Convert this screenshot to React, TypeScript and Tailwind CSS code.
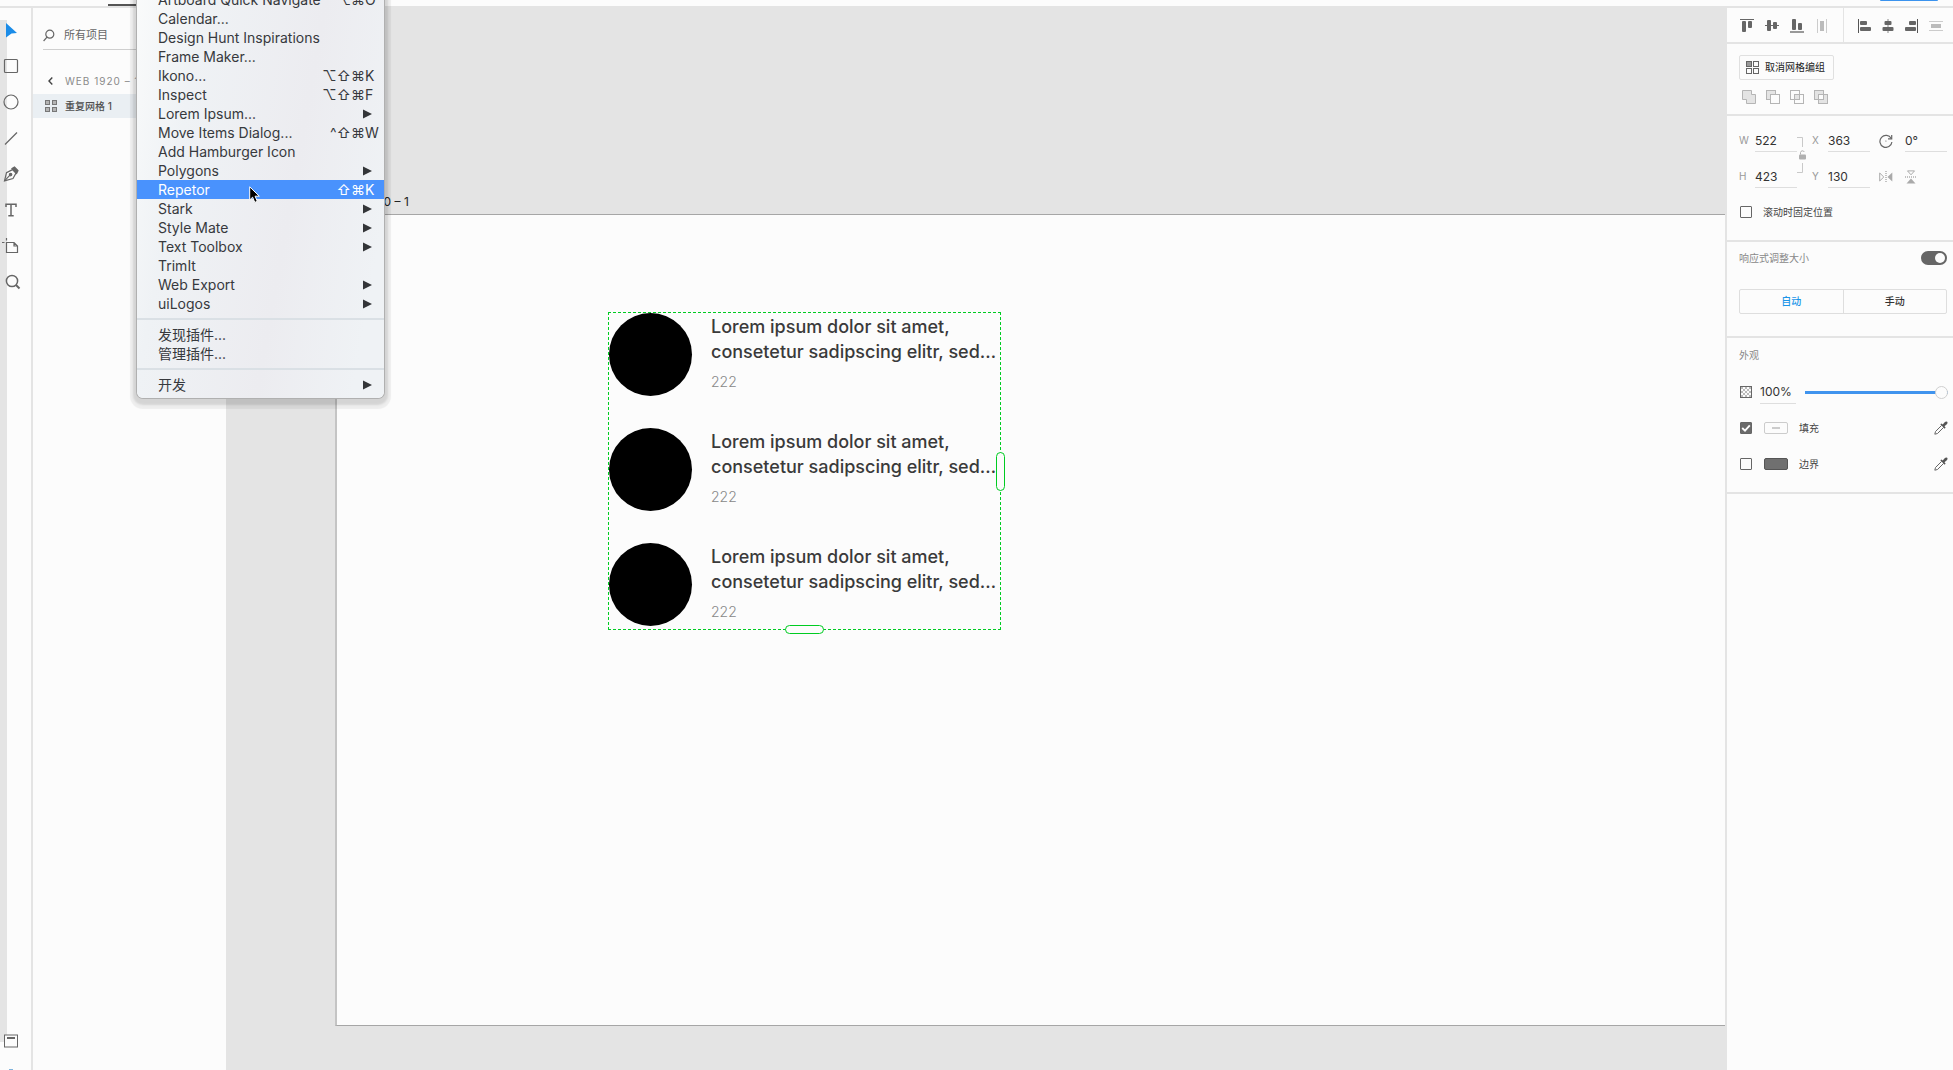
import type { ReactNode } from "react";

type MenuEntry = { label: string; mods?: string; letter?: string; sub?: boolean; active?: boolean };

const menuGroups: MenuEntry[][] = [
  [
    { label: "Artboard Quick Navigate", mods: "⌥⌘", letter: "O" },
    { label: "Calendar..." },
    { label: "Design Hunt Inspirations" },
    { label: "Frame Maker..." },
    { label: "Ikono...", mods: "⌥⇧⌘", letter: "K" },
    { label: "Inspect", mods: "⌥⇧⌘", letter: "F" },
    { label: "Lorem Ipsum...", sub: true },
    { label: "Move Items Dialog...", mods: "^⇧⌘", letter: "W" },
    { label: "Add Hamburger Icon" },
    { label: "Polygons", sub: true },
    { label: "Repetor", mods: "⇧⌘", letter: "K", active: true },
    { label: "Stark", sub: true },
    { label: "Style Mate", sub: true },
    { label: "Text Toolbox", sub: true },
    { label: "TrimIt" },
    { label: "Web Export", sub: true },
    { label: "uiLogos", sub: true },
  ],
  [{ label: "发现插件..." }, { label: "管理插件..." }],
  [{ label: "开发", sub: true }],
];

function PluginMenu() {
  return (
    <div
      role="menu"
      className="absolute -top-[14px] left-[137px] z-20 w-[247px] rounded-b-md bg-[linear-gradient(100deg,#fafbfb_0%,#eff2f5_22%,#ececf0_60%,#eff2f5_90%)] pt-1 pb-1 text-[14px] text-[#37393d] shadow-[0_0_0_1px_#b0b0b0,0_3px_2px_4px_rgba(0,0,0,0.1),0_4px_1px_7px_rgba(0,0,0,0.06)]"
    >
      {menuGroups.map((group, g) => (
        <div key={g} className={g > 0 ? "mt-[5px] border-t-2 border-[#dae0e5] pt-[5px]" : ""}>
          {group.map((item) => (
            <button
              key={item.label}
              role="menuitem"
              className={
                item.active
                  ? "flex h-[19px] w-full items-center bg-[#4992fd] pl-[21px] text-left leading-[19px] text-white"
                  : "flex h-[19px] w-full items-center pl-[21px] text-left leading-[19px]"
              }
            >
              <span className="flex-1 whitespace-nowrap">{item.label}</span>
              {item.mods && (
                <>
                  <span>{item.mods}</span>
                  <span className="w-[19px]">{item.letter}</span>
                </>
              )}
              {item.sub && (
                <svg className="mr-3" width="9" height="10" viewBox="0 0 9 10" fill="#333538">
                  <path d="M0 0.5 L9 5 L0 9.5Z" />
                </svg>
              )}
            </button>
          ))}
        </div>
      ))}
      <svg className="absolute top-[200px] left-[112px]" width="12" height="18" viewBox="0 0 12 18">
        <path
          d="M0.7 0.8 L0.7 14 L3.6 11.2 L5.8 16.4 L8.3 15.3 L6.1 10.2 L10.3 10.2Z"
          fill="#000"
          stroke="#fff"
          strokeWidth="1"
        />
      </svg>
    </div>
  );
}

const tools: { name: string; icon: ReactNode }[] = [
  { name: "选择", icon: <path d="M6 2 L17 12 L11.5 12.5 L6 16.5Z" fill="#1b8ce8" stroke="none" /> },
  { name: "矩形", icon: <rect x="4.5" y="2.5" width="13" height="13" rx="1" /> },
  { name: "椭圆", icon: <circle cx="11" cy="9" r="7" /> },
  { name: "直线", icon: <path d="M5 15.5 L17 3.5" /> },
  {
    name: "钢笔",
    icon: (
      <>
        <path d="M4.5 15.8 L6.5 7.6 L12.5 4.6 L16 8 L13 13.6Z" />
        <path d="M12 3.6 L14.5 2 L18 5.6 L16.6 8.4Z" fill="#666" />
        <path d="M4.5 15.8 L10.2 9.8" />
        <circle cx="10.6" cy="9.6" r="1.2" fill="#666" />
      </>
    ),
  },
  {
    name: "文本",
    icon: <path d="M6 6 L6 3.2 L16 3.2 L16 6 M11 3.2 L11 14.8 M8.3 14.8 L13.7 14.8" strokeWidth="1.5" />,
  },
  {
    name: "画板",
    icon: <path d="M6.5 5.5 L14 5.5 L17.5 9 L17.5 15.5 L6.5 15.5Z M14 5.5 L14 9 L17.5 9 M6.5 1 L6.5 3.5 M2 5.5 L4.5 5.5" />,
  },
  {
    name: "缩放",
    icon: (
      <>
        <circle cx="12" cy="8" r="5.6" strokeWidth="1.5" />
        <path d="M16 12 L19.5 15.5" strokeWidth="2" />
      </>
    ),
  },
];

function Toolbar() {
  return (
    <nav className="relative flex w-[33px] shrink-0 flex-col border-r-2 border-[#e4e4e4] pt-1">
      <span className="absolute top-3 bottom-7 left-0 w-[7px] bg-[#e4e4e4]" />
      {tools.map((t) => (
        <button key={t.name} aria-label={t.name} className="relative flex h-9 w-[22px] items-center">
          <svg width="22" height="18" viewBox="0 0 22 18" fill="none" stroke="#666" strokeWidth="1.2">
            {t.icon}
          </svg>
        </button>
      ))}
      <button aria-label="图层" className="relative mt-auto mb-[21px] ml-1 h-[14px] w-[14px]">
        <svg width="14" height="14" viewBox="0 0 14 14" fill="#fcfcfc" stroke="#666">
          <rect x="0.5" y="1" width="13" height="12" strokeWidth="1" />
          <path d="M3 4 L11 4" strokeWidth="2" />
        </svg>
      </button>
      <span className="ml-[9px] h-px w-1 bg-[#7fb3dc]" />
    </nav>
  );
}

function LayersPanel() {
  return (
    <aside className="w-[193px] shrink-0">
      <label className="ml-[10px] flex h-[42px] items-center border-b border-[#cfcfcf] pt-[14px] text-[11px]">
        <svg width="12" height="13" viewBox="0 0 12 13" fill="none" stroke="#666" strokeWidth="1.2">
          <circle cx="6.8" cy="5.2" r="4" />
          <path d="M4 8.2 L0.6 12" />
        </svg>
        <input
          aria-label="搜索"
          defaultValue="所有项目"
          className="ml-[9px] w-24 bg-transparent text-[#666] outline-none"
        />
      </label>
      <button className="mt-[21px] flex h-5 items-center pl-[15px] text-[10px] text-[#8a8a8a]">
        <svg width="5" height="8" viewBox="0 0 5 8" fill="none" stroke="#444" strokeWidth="1.4">
          <path d="M4.3 0.6 L1 4 L4.3 7.4" />
        </svg>
        <span className="ml-3 tracking-widest whitespace-nowrap">WEB 1920 – 1</span>
      </button>
      <button className="mt-[3px] flex h-6 w-full items-center bg-[#eaeff3] pl-3 text-[10px] font-medium text-[#505050]">
        <svg width="12" height="12" viewBox="0 0 12 12" fill="#b4b4b4" stroke="#777">
          <rect x="0.5" y="0.5" width="4" height="4" />
          <rect x="7.5" y="0.5" width="4" height="4" />
          <rect x="0.5" y="7.5" width="4" height="4" />
          <rect x="7.5" y="7.5" width="4" height="4" />
        </svg>
        <span className="ml-2">重复网格 1</span>
      </button>
    </aside>
  );
}

function Canvas() {
  return (
    <main className="flex min-w-0 flex-1 flex-col bg-[#e4e4e4] pt-[184px] pb-11 pl-[109px]">
      <div className="h-[22px] text-[12px] leading-5 text-[#222]">Web 1920 – 1</div>
      <section className="relative flex-1 border-y border-l-2 border-y-[#a6a6a6] border-l-[#c4c4c4] bg-[#fcfcfc]">
        <div className="absolute top-[97px] left-[271px] flex h-[318px] w-[393px] flex-col gap-8 border border-dashed border-[#00cc22]">
          {[0, 1, 2].map((i) => (
            <article key={i} className="flex gap-[19px]">
              <div className="size-[83px] shrink-0 rounded-full bg-black" />
              <div className="pt-px">
                <p className="text-[18px] leading-[25px] font-medium whitespace-nowrap text-[#3a3a3a]">
                  Lorem ipsum dolor sit amet,
                  <br />
                  consetetur sadipscing elitr, sed…
                </p>
                <p className="pt-[6px] text-[14px] leading-6 font-light text-[#888]">222</p>
              </div>
            </article>
          ))}
          <span className="absolute top-[139px] -right-[5px] h-[39px] w-[9px] rounded-full border border-[#00cc22] bg-[#fcfcfc]" />
          <span className="absolute -bottom-[5px] left-[176px] h-[9px] w-[39px] rounded-full border border-[#00cc22] bg-[#fcfcfc]" />
        </div>
      </section>
    </main>
  );
}

function AlignRow() {
  const left: [string, ReactNode][] = [
    ["顶对齐", <><path d="M0 .5H14" stroke="#666" /><rect x="2" y="2" width="4" height="11" rx="1" /><rect x="8" y="2" width="4" height="7" rx="1" /></>],
    ["垂直居中", <><path d="M0 6.5H14" stroke="#666" /><rect x="2" y="1" width="4" height="11" rx="1" /><rect x="8" y="3" width="4" height="7" rx="1" /></>],
    ["底对齐", <><path d="M0 13H14" stroke="#999" strokeWidth="2" /><rect x="2" y="0" width="4" height="11" rx="1" /><rect x="8" y="4" width="4" height="7" rx="1" /></>],
    ["水平分布", <><path d="M2.5 0V14M11.5 0V14" stroke="#ccc" /><rect x="5" y="2" width="4" height="10" fill="#bbb" /></>],
  ];
  const right: [string, ReactNode][] = [
    ["左对齐", <><path d="M1.5 0V14" stroke="#555" /><rect x="3" y="2" width="7" height="4" rx="1" /><rect x="3" y="8" width="11" height="4" rx="1" /></>],
    ["水平居中", <><path d="M7 0V14" stroke="#888" /><rect x="3.5" y="2" width="7" height="4" rx="1" /><rect x="1.5" y="8" width="11" height="4" rx="1" /></>],
    ["右对齐", <><path d="M12.5 0V14" stroke="#555" /><rect x="4" y="2" width="7" height="4" rx="1" /><rect x="0" y="8" width="11" height="4" rx="1" /></>],
    ["垂直分布", <><path d="M0 2.5H14M0 11.5H14" stroke="#ccc" /><rect x="2" y="5" width="10" height="4" fill="#bbb" /></>],
  ];
  const draw = ([name, icon]: [string, ReactNode]) => (
    <button key={name} aria-label={name}>
      <svg width="14" height="14" viewBox="0 0 14 14" fill="#666">
        {icon}
      </svg>
    </button>
  );
  return (
    <div className="flex h-9 border-b-2 border-[#e4e4e4]">
      <div className="flex w-[117px] items-center justify-between border-r border-[#e4e4e4] pt-px pr-[14px] pl-[13px]">{left.map(draw)}</div>
      <div className="flex flex-1 items-center justify-between pt-px pr-[10px] pl-[13px]">{right.map(draw)}</div>
    </div>
  );
}

function BooleanRow() {
  const ops: [string, ReactNode][] = [
    ["相加", <path d="M.5 .5H9.5V4.5H13.5V13.5H4.5V9.5H.5Z" fill="#e4e4e4" />],
    ["减去", <><rect x=".5" y=".5" width="9" height="9" fill="#e4e4e4" /><rect x="4.5" y="4.5" width="9" height="9" fill="#fcfcfc" /></>],
    ["交叉", <><rect x=".5" y=".5" width="9" height="9" /><rect x="4.5" y="4.5" width="9" height="9" /><rect x="4.5" y="4.5" width="5" height="5" fill="#e4e4e4" /></>],
    ["排除重叠", <><rect x=".5" y=".5" width="9" height="9" fill="#e4e4e4" /><rect x="4.5" y="4.5" width="9" height="9" fill="#e4e4e4" /><rect x="4.5" y="4.5" width="5" height="5" fill="#fcfcfc" /></>],
  ];
  return (
    <div className="mt-[10px] flex gap-[10px] pl-[3px]">
      {ops.map(([name, icon]) => (
        <button key={name} aria-label={name}>
          <svg width="14" height="14" viewBox="0 0 14 14" fill="none" stroke="#b5b5b5">
            {icon}
          </svg>
        </button>
      ))}
    </div>
  );
}

function Field({ label, name, value }: { label?: string; name: string; value: string }) {
  return (
    <label className="flex items-center">
      {label && <span className="w-4 text-[10px] text-[#999]">{label}</span>}
      <input
        aria-label={name}
        defaultValue={value}
        className="h-[23px] w-[42px] border-b border-[#dedede] bg-transparent text-[12px] text-[#333] outline-none"
      />
    </label>
  );
}

function TransformFields() {
  return (
    <div className="flex">
      <div className="flex flex-col gap-[13px]">
        <Field label="W" name="宽度" value="522" />
        <Field label="H" name="高度" value="423" />
      </div>
      <svg className="mt-2 shrink-0" width="10" height="37" viewBox="0 0 10 37" fill="none" stroke="#c9c9c9">
        <path d="M0 .5H5.5V10M5.5 26V35.5H0" />
        <rect x="2" y="17.5" width="7" height="5" rx="1" fill="#b0b0b0" stroke="none" />
        <path d="M3.5 17.5V15.5A2 2 0 0 1 7.3 15" stroke="#b0b0b0" />
      </svg>
      <div className="ml-[5px] flex flex-col gap-[13px]">
        <Field label="X" name="水平位置" value="363" />
        <Field label="Y" name="垂直位置" value="130" />
      </div>
      <div className="ml-[9px] flex flex-col gap-[13px]">
        <div className="flex items-center gap-3">
          <svg width="14" height="14" viewBox="0 0 14 14" fill="none" stroke="#666" strokeWidth="1.2">
            <path d="M12.2 4.5A6 6 0 1 0 12.9 8" />
            <path d="M12.7 1V4.8H9" />
            <circle cx="6.9" cy="7" r=".6" fill="#666" stroke="none" />
          </svg>
          <Field name="旋转" value="0°" />
        </div>
        <div className="flex h-[23px] items-center gap-3">
          <button aria-label="水平翻转">
            <svg width="14" height="14" viewBox="0 0 14 14" fill="none" stroke="#aaa">
              <path d="M.7 3L4.8 7L.7 11Z" />
              <path d="M7 1V13" stroke="#888" strokeDasharray="1 1" />
              <path d="M13.3 2.5V11.5L8.5 7Z" fill="#aaa" stroke="none" />
            </svg>
          </button>
          <button aria-label="垂直翻转">
            <svg width="12" height="14" viewBox="0 0 12 14" fill="none" stroke="#aaa">
              <path d="M2.5 .9H9.5L6 4.8Z" />
              <path d="M0 7H12" stroke="#888" strokeDasharray="1 1" />
              <path d="M1.5 13.5H10.5L6 8.5Z" fill="#aaa" stroke="none" />
            </svg>
          </button>
        </div>
      </div>
    </div>
  );
}

function Checkbox({ checked, name, id }: { checked?: boolean; name: string; id: string }) {
  return (
    <span className="relative ml-px flex size-3">
      <input
        id={id}
        type="checkbox"
        aria-label={name}
        defaultChecked={checked}
        className="peer size-3 appearance-none rounded-[1px] border border-[#666] checked:bg-[#6b6b6b]"
      />
      <svg className="pointer-events-none absolute hidden peer-checked:block" width="12" height="12" viewBox="0 0 12 12" fill="none" stroke="#fff" strokeWidth="1.8">
        <path d="M2.2 6L5 8.7L9.8 3.4" />
      </svg>
    </span>
  );
}

function Eyedropper() {
  return (
    <svg width="14" height="14" viewBox="0 0 14 14" fill="none" stroke="#666" strokeWidth="1">
      <path d="M7.6 4.4L1.5 10.5L.8 13.2L3.5 12.5L9.6 6.4" />
      <path d="M6.3 3.3L7.4 2.4L8.7 3.5L10.9 .9Q12.2 0 13.2 .8Q14 1.8 13.1 3.1L10.5 5.3L11.6 6.6L10.7 7.7Z" fill="#555" stroke="none" />
    </svg>
  );
}

function Inspector() {
  return (
    <aside className="w-[228px] shrink-0 border-l-2 border-[#e4e4e4] text-[10px] text-[#444]">
      <AlignRow />
      <section className="h-[72px] border-b-2 border-[#e4e4e4] pt-[11px] pl-3">
        <button className="flex h-[25px] w-[95px] items-center gap-[6px] rounded-xs border border-[#e0e0e0] pl-[6px] text-[#222]">
          <svg width="13" height="13" viewBox="0 0 13 13" fill="none" stroke="#666">
            <rect x=".5" y=".5" width="5" height="5" fill="#999" />
            <rect x="7.5" y=".5" width="5" height="5" />
            <rect x=".5" y="7.5" width="5" height="5" />
            <rect x="7.5" y="7.5" width="5" height="5" />
          </svg>
          <span className="whitespace-nowrap">取消网格编组</span>
        </button>
        <BooleanRow />
      </section>
      <section className="h-[126px] border-b-2 border-[#e4e4e4] pt-[13px] pl-3">
        <TransformFields />
        <div className="mt-4 flex h-4 items-center">
          <Checkbox id="pin" name="滚动时固定位置" />
          <label htmlFor="pin" className="ml-[11px]">
            滚动时固定位置
          </label>
        </div>
      </section>
      <section className="h-24 border-b-2 border-[#e4e4e4] pt-2 pr-[6px] pl-3">
        <label className="flex h-4 items-center justify-between text-[#888]">
          <span>响应式调整大小</span>
          <span className="relative flex">
            <input type="checkbox" role="switch" defaultChecked className="peer h-[14px] w-[26px] appearance-none rounded-full bg-[#666]" />
            <span className="absolute top-[2px] left-[2px] size-[10px] rounded-full bg-[#fcfcfc] peer-checked:left-[14px]" />
          </span>
        </label>
        <div className="mt-[23px] flex h-[25px] rounded-xs border border-[#dedede] font-medium">
          <button className="flex-1 border-r border-[#dedede] text-[#1b95e8]">自动</button>
          <button className="flex-1 text-[#333]">手动</button>
        </div>
      </section>
      <section className="h-[156px] border-b-2 border-[#e4e4e4] pt-[9px] pr-[5px] pl-3">
        <h2 className="h-4 leading-4 text-[#888]">外观</h2>
        <div className="mt-[17px] flex h-6 items-center">
          <svg className="ml-px" width="12" height="12" viewBox="0 0 12 12" fill="#bbb">
            <path d="M1 1h2v2h-2zM5 1h2v2h-2zM9 1h2v2h-2zM3 3h2v2h-2zM7 3h2v2h-2zM1 5h2v2h-2zM5 5h2v2h-2zM9 5h2v2h-2zM3 7h2v2h-2zM7 7h2v2h-2zM1 9h2v2h-2zM5 9h2v2h-2zM9 9h2v2h-2z" />
            <rect x=".5" y=".5" width="11" height="11" fill="none" stroke="#666" />
          </svg>
          <input aria-label="不透明度值" defaultValue="100%" className="ml-2 h-6 w-9 border-b border-[#dedede] bg-transparent text-[12px] text-[#333] outline-none" />
          <input
            aria-label="不透明度"
            type="range"
            defaultValue={100}
            className="ml-[9px] h-[13px] min-w-0 flex-1 appearance-none bg-[linear-gradient(#4094ee,#4094ee)] bg-[length:100%_3px] bg-center bg-no-repeat [&::-webkit-slider-thumb]:size-[13px] [&::-webkit-slider-thumb]:appearance-none [&::-webkit-slider-thumb]:rounded-full [&::-webkit-slider-thumb]:border [&::-webkit-slider-thumb]:border-[#cfcfcf] [&::-webkit-slider-thumb]:bg-[#fcfcfc]"
          />
        </div>
        <div className="mt-3 flex h-6 items-center">
          <Checkbox id="fill" name="填充" checked />
          <button aria-label="填充颜色" className="ml-3 flex h-3 w-6 items-center justify-center rounded-xs border border-[#ccc]">
            <span className="h-[2px] w-2 bg-[#ccc]" />
          </button>
          <label htmlFor="fill" className="ml-[11px] flex-1">填充</label>
          <button aria-label="吸取填充颜色"><Eyedropper /></button>
        </div>
        <div className="mt-3 flex h-6 items-center">
          <Checkbox id="stroke" name="边界" />
          <button aria-label="边界颜色" className="ml-3 h-3 w-6 rounded-xs border border-[#555] bg-[#707070]" />
          <label htmlFor="stroke" className="ml-[11px] flex-1">边界</label>
          <button aria-label="吸取边界颜色"><Eyedropper /></button>
        </div>
      </section>
    </aside>
  );
}

export default function App() {
  return (
    <div className="relative flex h-screen flex-col overflow-hidden bg-[#fcfcfc] font-['Inter','Noto_Sans_CJK_SC',sans-serif]">
      <header className="flex h-2 shrink-0 items-start justify-between border-b-2 border-[#e4e4e4]">
        <span className="mt-1 ml-[108px] h-[2px] w-12 bg-[#555]" />
        <span className="mr-[15px] h-px w-[58px] rounded-b-sm bg-[#3b93ee]" />
      </header>
      <div className="flex min-h-0 flex-1">
        <Toolbar />
        <LayersPanel />
        <Canvas />
        <Inspector />
      </div>
      <PluginMenu />
    </div>
  );
}
